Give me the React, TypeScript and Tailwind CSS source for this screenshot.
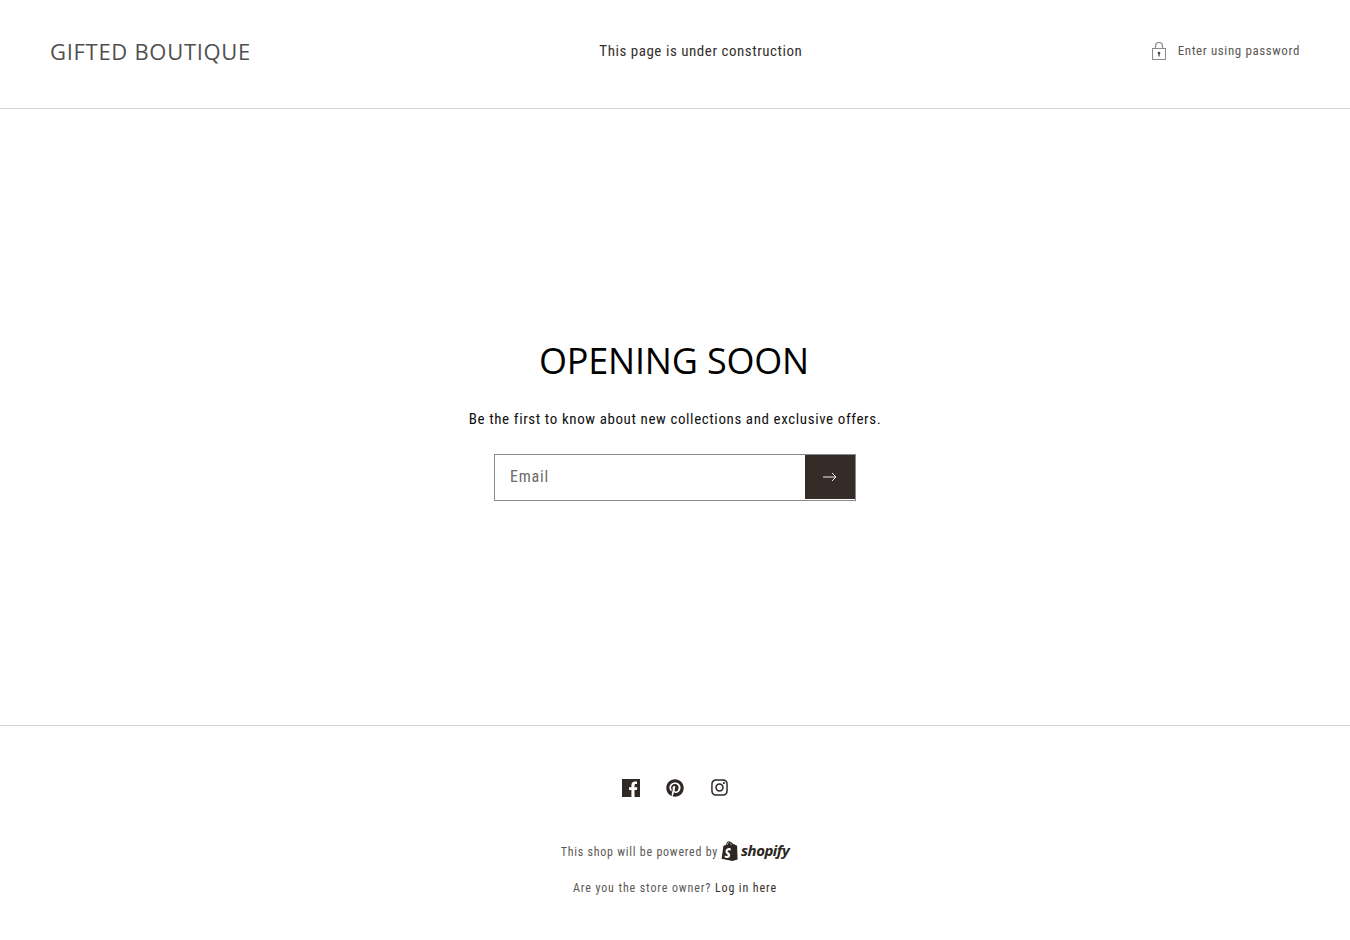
import { FaPinterest, FaInstagram } from "react-icons/fa";

const narrow = "font-['Roboto_Condensed','Liberation_Sans',sans-serif]";
const heading = "font-['Open_Sans','Noto_Sans',sans-serif]";

const LockIcon = () => (
  <svg width="16" height="19" viewBox="0 0 16 19" fill="none" className="shrink-0">
    <rect x="1.500" y="6.500" width="13" height="11" stroke="#8a8a8a" strokeWidth="1" />
    <path d="M4.500 6.500V4a3.500 3.500 0 0 1 7 0v2.500" stroke="#8a8a8a" strokeWidth="1.200" />
    <circle cx="8" cy="11" r="1.300" fill="#444" />
    <rect x="7.400" y="11.500" width="1.200" height="3" fill="#444" />
  </svg>
);

const ArrowIcon = () => (
  <svg width="14" height="10" viewBox="0 0 14 10" fill="none">
    <path d="M0 5h13M9 1l4 4-4 4" stroke="#f4efe9" strokeWidth="1" />
  </svg>
);

const FacebookIcon = () => (
  <svg width="18" height="18" viewBox="0 0 18 18">
    <path d="M0 0h18v18h-5.500v-7h2.400l.4-2.800h-2.800V6.500c0-.8.3-1.400 1.400-1.400H15V2.600c-.3 0-1.100-.1-2.100-.1-2.100 0-3.500 1.300-3.500 3.600v2.100H7V11h2.400v7H0V0Z" fill="#2f2825" />
  </svg>
);

const ShopifyBag = () => (
  <svg width="17" height="20" viewBox="0 0 17 20" className="shrink-0 mb-[3px]">
    <path d="M0.600 17.800 2.400 4.800 5 4C5.400 1.700 6.600.3 8 .3c.8 0 1.300.4 1.600.9h.5c.8 0 1.400.7 1.800 1.900l1.200.2 3 1.400L16.600 18.400 11.400 20 .6 17.800Z" fill="#2d2623" />
    <path d="M6.400 4V3.400C6.600 2 7.300 1.300 8 1.300M9.300 2.200c.5.300.9 1 .9 1.800" stroke="#fff" strokeWidth=".6" fill="none" />
    <path d="M10 7.800 9.400 9.700s-.8-.4-1.600-.4c-1.200 0-1.300.8-1.300 1 0 1 2.700 1.400 2.700 3.800 0 1.900-1.200 3-2.800 3-2 0-2.900-1.200-2.900-1.200l.5-1.700s1 .9 1.900.9c.6 0 .8-.5.8-.8 0-1.400-2.200-1.400-2.200-3.600C4.500 8.600 5.900 7 8.300 7c1 0 1.700.8 1.700.8Z" fill="#fff" />
  </svg>
);

const App = () => {
  return (
    <div className={`w-full h-[940px] bg-white flex flex-col overflow-hidden ${narrow}`}>
      {/* Header */}
      <header className="h-[109px] shrink-0 border-b border-[#d4d4d4] px-[50px] flex items-center justify-between pb-[6px]">
        <a className={`text-[22px] leading-none tracking-[0.7px] text-[#505050] ${heading}`}>GIFTED BOUTIQUE</a>
        <p className="text-[15px] tracking-[0.54px] text-[#36302d]">This page is under construction</p>
        <div className="flex items-center gap-[11px] text-[13px] tracking-[0.6px] text-[#5c5856]">
          <LockIcon />
          <span>Enter using password</span>
        </div>
      </header>

      {/* Main */}
      <main className="h-[616px] shrink-0 flex flex-col items-center pt-[229px]">
        <h1 className={`text-[36px] leading-[46px] tracking-[-0.2px] text-black pr-[2px] ${heading}`}>OPENING SOON</h1>
        <p className="mt-[25px] text-[15px] leading-[20px] tracking-[0.6px] text-[#111]">
          Be the first to know about new collections and exclusive offers.
        </p>
        <form className="mt-[25px] w-[362px] h-[47px] border border-[#8a8a8a] flex">
          <div className="flex-1 pl-[15px] flex items-center pb-[2px] text-[16px] tracking-[0.8px] text-[#6e6a68]">Email</div>
          <button type="button" className="w-[50px] h-[44px] bg-[#352c28] flex items-center justify-center">
            <ArrowIcon />
          </button>
        </form>
      </main>

      {/* Footer */}
      <footer className="flex-1 border-t border-[#d4d4d4] flex flex-col items-center pt-[52px]">
        <div className="flex items-center gap-[26px] text-[#2f2825]">
          <FacebookIcon />
          <FaPinterest size={18} />
          <FaInstagram size={19} />
        </div>
        <div className="mt-[44px] h-[22px] flex items-center gap-[3px] text-[12px] tracking-[0.75px] text-[#5c5856]">
          <span>This shop will be powered by</span>
          <span className="flex items-center gap-[3px] text-[#2d2623]">
            <ShopifyBag />
            <span className="font-['Open_Sans',sans-serif] italic font-bold text-[15px] leading-none tracking-[-0.5px] pb-[4px]">shopify</span>
          </span>
        </div>
        <p className="mt-[17px] text-[12px] leading-[16px] tracking-[0.89px] text-[#5c5856]">
          Are you the store owner? <a className="text-[#36302d]">Log in here</a>
        </p>
      </footer>
    </div>
  );
};

export default App;
